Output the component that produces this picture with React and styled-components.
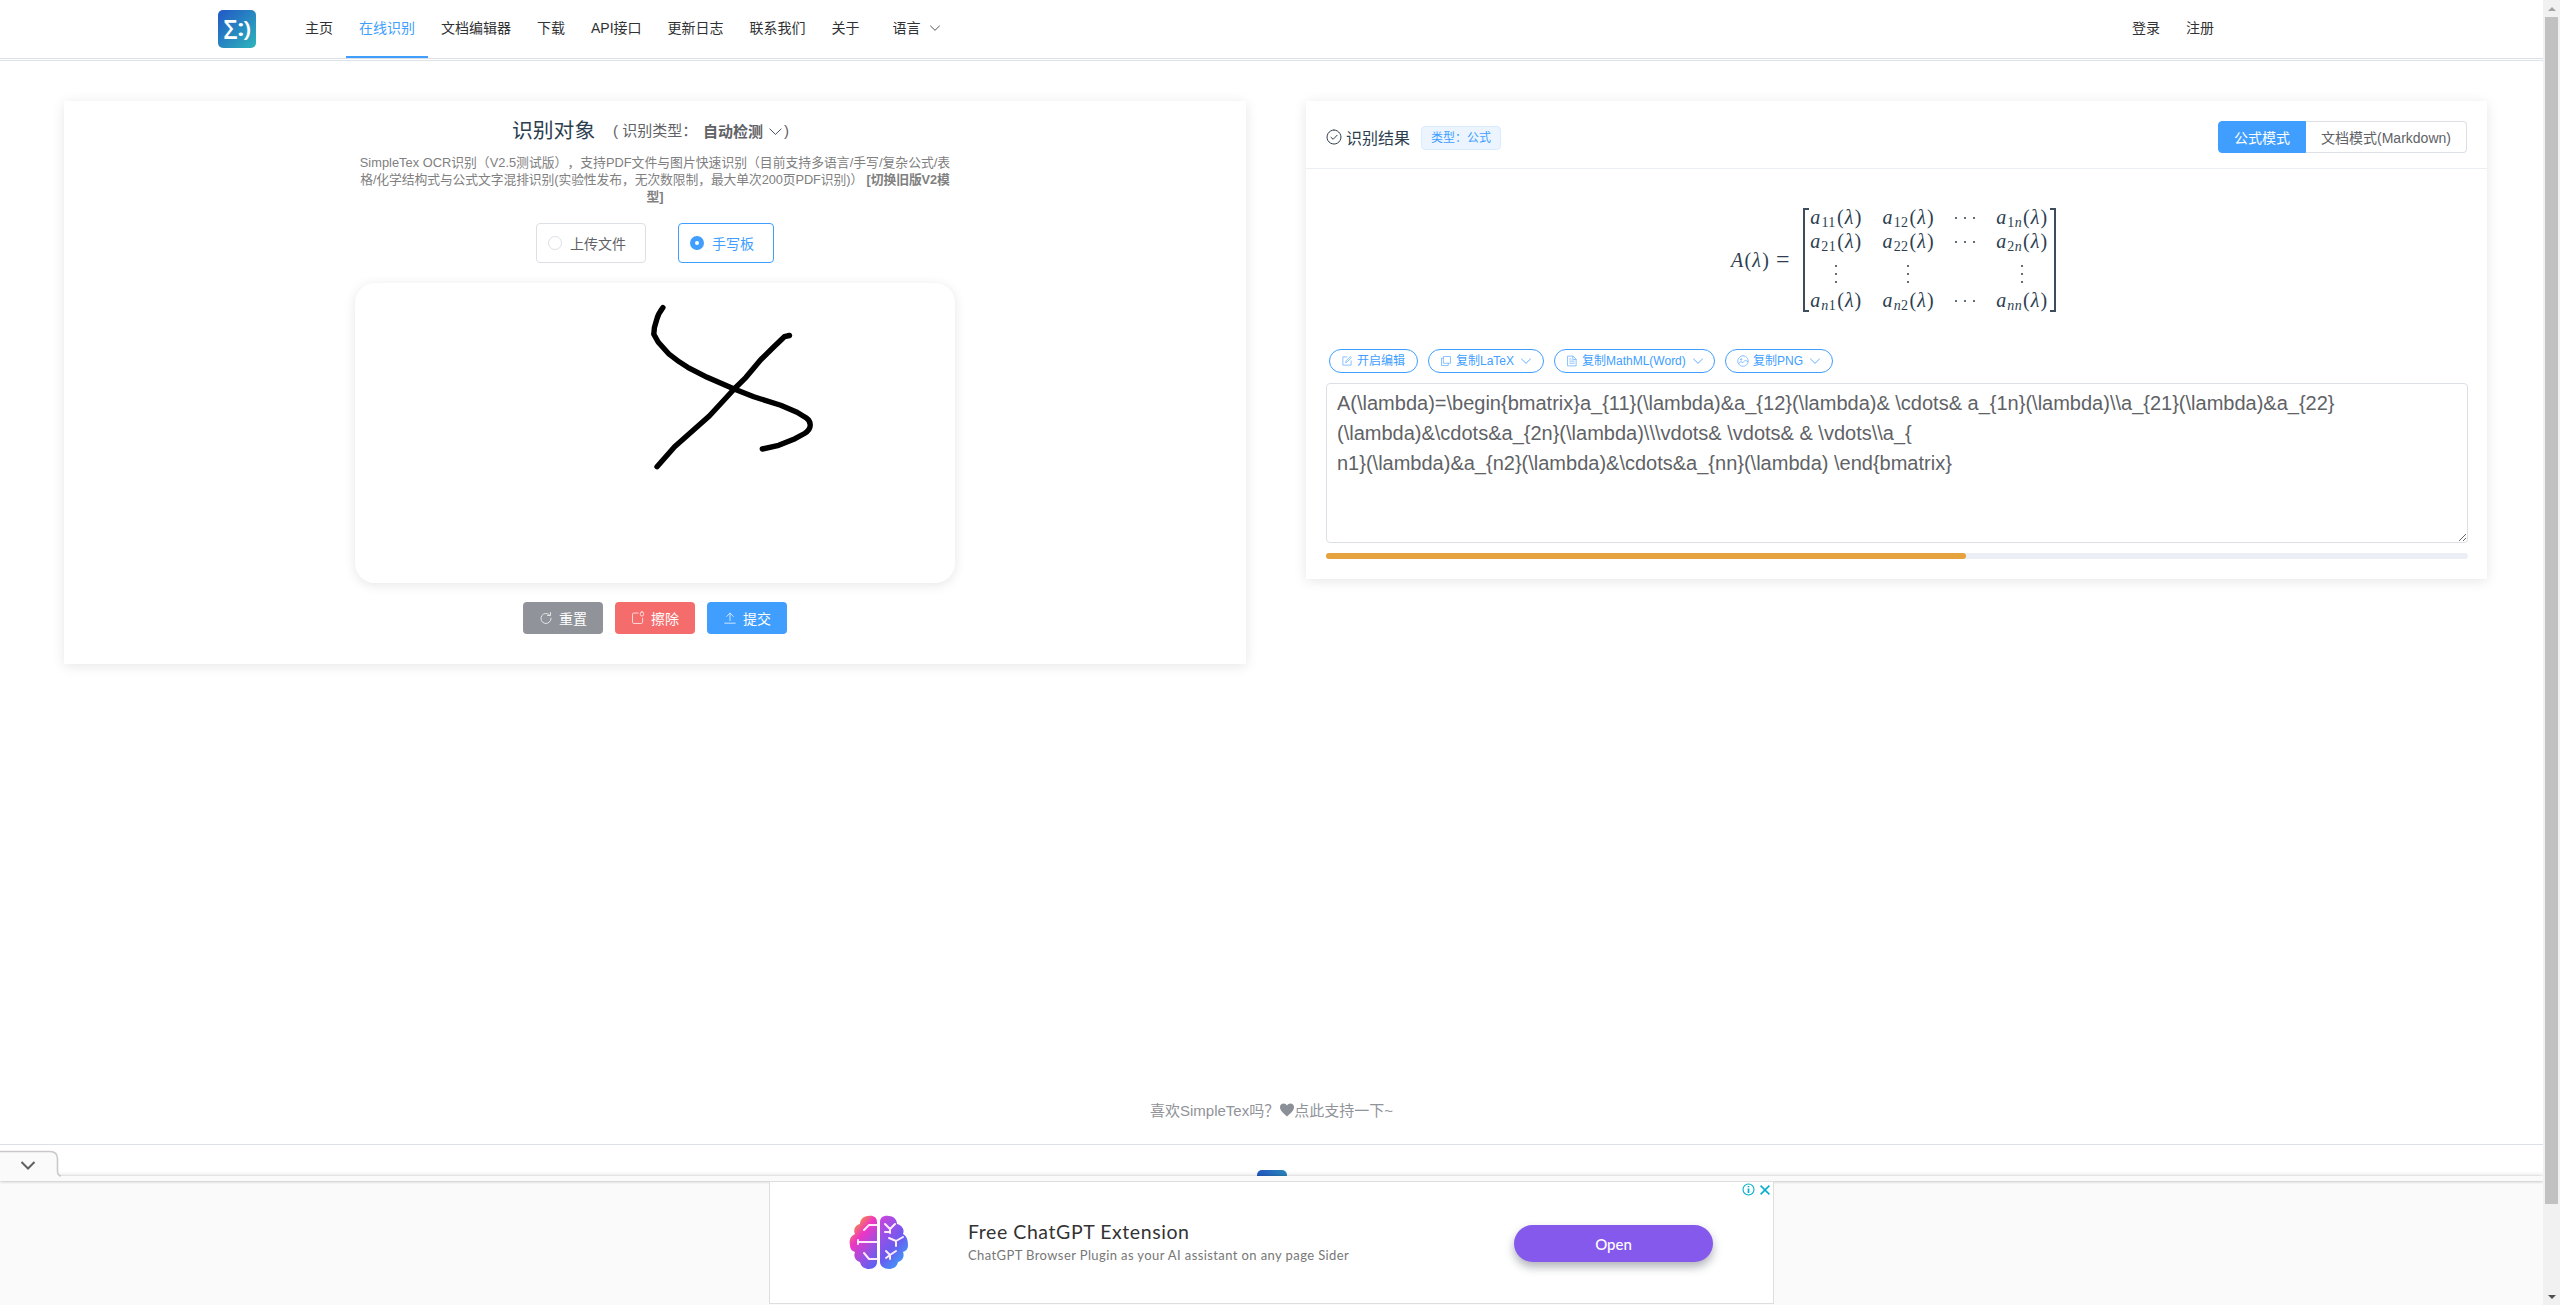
import React from "react";
import styled, { createGlobalStyle, css } from "styled-components";

const Global = createGlobalStyle`
  * { box-sizing: border-box; }
  body { margin: 0; background: #fff; overflow: hidden; }
  body, button, textarea {
    font-family: "Liberation Sans", Arial, "Noto Sans CJK SC", sans-serif;
  }
`;

const Window = styled.div`
  display: flex;
  width: 2560px;
  height: 1305px;
  overflow: hidden;
  background: #fff;
  color: #2c3e50;
`;
const Page = styled.div`
  position: relative;
  width: 2543px;
  height: 1305px;
  display: flex;
  flex-direction: column;
  overflow: hidden;
`;

/* scrollbar */
const Scrollbar = styled.div`
  width: 17px;
  background: #f1f1f1;
  display: flex;
  flex-direction: column;
  align-items: center;
`;
const Arrow = styled.div`
  height: 17px;
  display: flex;
  align-items: center;
  justify-content: center;
`;
const Thumb = styled.div`
  width: 13px;
  height: 1187px;
  background: #c1c1c1;
  margin-bottom: auto;
`;

/* header */
const Header = styled.header`
  flex: none;
  height: 59px;
  border-bottom: 1px solid #dcdfe6;
  padding: 0 316px 0 218px;
  display: flex;
  align-items: flex-start;
`;
const HeaderRule = styled.div`
  flex: none;
  height: 2px;
  border-bottom: 1px solid #e0e2ea;
`;
const LogoBox = styled.div`
  width: 38px;
  height: 38px;
  margin: 10px 36px 0 0;
`;
const NavItem = styled.a`
  height: 58px;
  line-height: 56px;
  padding: 0 13px;
  font-size: 14px;
  white-space: nowrap;
  color: ${(p) => (p.$active ? "#409eff" : "#303133")};
  border-bottom: 2px solid ${(p) => (p.$active ? "#409eff" : "transparent")};
`;
const LangItem = styled(NavItem)`
  padding-left: 20px;
  display: flex;
  align-items: center;
  gap: 8px;
`;
const Spacer = styled.div`
  flex: 1;
`;

/* cards */
const Main = styled.main`
  flex: none;
  height: 1083px;
  padding: 40px 56px 0 64px;
  display: flex;
  align-items: flex-start;
  gap: 60px;
  position: relative;
`;
const Card = styled.section`
  width: ${(p) => p.$w}px;
  height: ${(p) => p.$h}px;
  background: #fff;
  box-shadow: 0 2px 12px rgba(0, 0, 0, 0.1);
`;
const InputCard = styled(Card)`
  display: flex;
  flex-direction: column;
  align-items: center;
`;

const TitleRow = styled.div`
  width: 286px;
  height: 30px;
  margin-top: 15px;
  display: flex;
  align-items: center;
  white-space: nowrap;
`;
const Title = styled.span`
  font-size: 20.8px;
  line-height: 30px;
  width: 101px;
`;
const TypeLabel = styled.span`
  font-size: 15px;
  line-height: 30px;
  color: #606266;
  width: 90px;
`;
const TypeValue = styled.span`
  font-size: 15px;
  line-height: 30px;
  font-weight: 700;
  color: #606266;
  width: 65px;
  padding-top: 1px;
`;
const TypeClose = styled(TypeLabel)`
  width: auto;
  padding-left: 1px;
`;
const Intro = styled.p`
  margin: 8px 0 0;
  height: 51px;
  font-size: 12.8px;
  line-height: 17px;
  text-align: center;
  color: #808080;
  white-space: nowrap;
  text-spacing-trim: space-all;
`;
const IntroLine = styled.span`
  display: block;
  height: 17px;
  letter-spacing: ${(p) => p.$track}px;
`;
const RadioRow = styled.div`
  display: flex;
  gap: 32px;
  margin-top: 18px;
`;
const RadioBox = styled.label`
  height: 40px;
  border: 1px solid ${(p) => (p.$on ? "#409eff" : "#dcdfe6")};
  border-radius: 4px;
  padding: 0 19px 0 11px;
  display: flex;
  align-items: center;
  gap: 8px;
  font-size: 14px;
  color: ${(p) => (p.$on ? "#409eff" : "#606266")};
`;
const Dot = styled.span`
  width: 14px;
  height: 14px;
  border-radius: 50%;
  background: #fff;
  border: ${(p) => (p.$on ? "5px solid #409eff" : "1px solid #dcdfe6")};
`;
const Board = styled.div`
  width: 600px;
  height: 300px;
  margin-top: 20px;
  border-radius: 20px;
  background: #fff;
  box-shadow: 0 2px 12px rgba(0, 0, 0, 0.1);
`;
const Actions = styled.div`
  display: flex;
  gap: 12px;
  margin-top: 19px;
`;
const Action = styled.button`
  width: 80px;
  height: 32px;
  border: 0;
  border-radius: 4px;
  padding: 0 0 1px;
  display: flex;
  align-items: center;
  justify-content: center;
  gap: 6px;
  font-size: 14px;
  color: #fff;
  background: ${(p) => p.$bg};
`;

/* results */
const ResultHead = styled.div`
  height: 68px;
  padding: 20px 20px 0 20px;
  border-bottom: 1px solid #ebeef5;
  display: flex;
  align-items: flex-start;
`;
const ResultTitle = styled.div`
  display: flex;
  align-items: center;
  gap: 4px;
  height: 31px;
  font-size: 16px;
`;
const Tag = styled.span`
  height: 24px;
  margin: 5px 0 0 11px;
  padding: 0 9px;
  border: 1px solid #d9ecff;
  border-radius: 4px;
  background: #ecf5ff;
  color: #409eff;
  font-size: 12px;
  line-height: 22px;
`;
const Modes = styled.div`
  display: flex;
  margin-left: auto;
`;
const Mode = styled.button`
  height: 32px;
  width: ${(p) => (p.$on ? 88 : 161)}px;
  padding: 0;
  font-size: 14px;
  white-space: nowrap;
  ${(p) =>
    p.$on
      ? css`
          color: #fff;
          background: #409eff;
          border: 1px solid #409eff;
          border-radius: 4px 0 0 4px;
        `
      : css`
          color: #606266;
          background: #fff;
          border: 1px solid #dcdfe6;
          border-left: 0;
          border-radius: 0 4px 4px 0;
        `}
`;
const ResultBody = styled.div`
  padding: 0 19px 0 20px;
`;
const Formula = styled.div`
  height: 180px;
  padding: 39px 0 0 405px;
  display: flex;
  align-items: flex-start;
  font-family: "Liberation Serif", "Times New Roman", serif;
  font-size: 20px;
  line-height: 24px;
`;
const Lhs = styled.div`
  width: 72px;
  padding-top: 39px;
  display: flex;
  align-items: baseline;
  letter-spacing: 1.2px;
`;
const Eq = styled.span`
  margin-left: 6px;
  font-size: 24px;
`;
const Matrix = styled.div`
  width: 253px;
  height: 104px;
  display: flex;
  justify-content: space-between;
`;
const Bracket = styled.div`
  width: 6px;
  height: 104px;
  border: 2px solid #3d4d5e;
  ${(p) => (p.$right ? "border-left: 0;" : "border-right: 0;")}
`;
const Cells = styled.div`
  display: grid;
  grid-template-columns: 51px 51px 20px 51px;
  grid-template-rows: 24px 24px 35px 24px;
  column-gap: 21.3px;
  justify-items: center;
  margin: -3px 1.5px 0 0;
`;
const Entry = styled.span`
  display: flex;
  align-items: baseline;
  width: 51px;
  justify-content: space-between;
`;
const It = styled.i`
  font-size: 20px;
`;
const Sub = styled.span`
  font-size: 14px;
  line-height: 14px;
  position: relative;
  top: 3px;
  letter-spacing: 0.4px;
`;
const DotsGroup = styled.span`
  display: flex;
  flex-direction: ${(p) => (p.$v ? "column" : "row")};
  gap: ${(p) => (p.$v ? 6 : 7)}px;
  align-self: center;
  align-items: center;
  margin-top: ${(p) => (p.$v ? 6 : 1)}px;
`;
const Pt = styled.span`
  width: 2px;
  height: 2px;
  border-radius: 1px;
  background: #2c3e50;
`;

const Pills = styled.div`
  display: flex;
  gap: 10px;
  padding-left: 3px;
`;
const Pill = styled.button`
  width: ${(p) => p.$w}px;
  height: 24px;
  padding: 0 0 0 11px;
  border: 1px solid #409eff;
  border-radius: 12px;
  background: #fff;
  color: #409eff;
  font-size: 12px;
  line-height: 22px;
  display: flex;
  align-items: center;
  white-space: nowrap;
  gap: 4px;
`;
const PillChevron = styled.span`
  display: flex;
  margin-left: 2px;
`;
const Latex = styled.textarea`
  display: block;
  width: 1142px;
  height: 160px;
  margin-top: 10px;
  padding: 4px 10px;
  border: 1px solid #dcdfe6;
  border-radius: 4px;
  outline: 0;
  resize: vertical;
  overflow: hidden;
  font-size: 20px;
  line-height: 30px;
  color: #606266;
`;
const Track = styled.div`
  width: 1142px;
  height: 6px;
  margin-top: 10px;
  border-radius: 3px;
  background: #ebeef5;
`;
const Fill = styled.div`
  width: 56%;
  height: 6px;
  border-radius: 3px;
  background: #e6a23c;
`;

/* page foot */
const Support = styled.div`
  position: absolute;
  left: 1150px;
  bottom: 24px;
  height: 22px;
  display: flex;
  align-items: center;
  font-size: 15px;
  color: #909399;
  white-space: nowrap;
`;
const Heart = styled.span`
  display: flex;
  margin: 2px 0 0 1px;
`;
const Foot = styled.footer`
  flex: none;
  height: 161px;
  border-top: 1px solid #dcdfe6;
  display: flex;
  justify-content: center;
`;
const FootLogo = styled.div`
  width: 30px;
  height: 30px;
  margin-top: 25px;
  border-radius: 5px;
  background: linear-gradient(90deg, #2259c5, #2a86bb);
`;

/* anchored advertisement */
const Anchor = styled.aside`
  position: absolute;
  left: 0;
  bottom: 0;
  width: 2543px;
  height: 129px;
  background: #fafafa;
  box-shadow: 0 0 5px rgba(0, 0, 0, 0.2);
  display: flex;
  flex-direction: column;
`;
const AnchorTop = styled.div`
  height: 5px;
  flex: none;
  background: #fafafa;
  box-shadow: 0 1px 3px rgba(0, 0, 0, 0.2);
`;
const Collapse = styled.div`
  position: absolute;
  left: 0;
  top: -26px;
  width: 60px;
  height: 30px;
`;
const Ad = styled.div`
  width: 1005px;
  height: 123px;
  margin-left: 769px;
  border: 1px solid #dedede;
  background: #fff;
  display: flex;
  align-items: flex-start;
  position: relative;
  font-family: Lato, "Open Sans", sans-serif;
`;
const Brain = styled.div`
  margin: 33px 0 0 79px;
  width: 60px;
  height: 56px;
`;
const AdCopy = styled.div`
  width: 400px;
  margin: 37px 0 0 59px;
  white-space: nowrap;
`;
const AdTitle = styled.div`
  font-size: 19.5px;
  line-height: 26px;
  color: #333;
  letter-spacing: 0.57px;
`;
const AdText = styled.div`
  font-size: 13px;
  line-height: 20px;
  color: #777;
  letter-spacing: 0.4px;
`;
const Open = styled.button`
  width: 199px;
  height: 37px;
  margin: 43px 0 0 146px;
  padding: 0;
  border: 0;
  border-radius: 19px;
  background: #8559ec;
  color: #fff;
  font: 500 15px Lato, sans-serif;
  letter-spacing: 0;
  box-shadow: 0 5px 10px rgba(60, 64, 80, 0.4);
`;
const AdMarks = styled.div`
  position: absolute;
  right: 3px;
  top: 1px;
  display: flex;
  align-items: center;
  gap: 5px;
`;

/* Element-style icons on a 1024 grid */
const Svg = ({ size = 14, d, w = 64, o = 1 }) => (
  <svg width={size} height={size} viewBox="0 0 1024 1024" fill="none" stroke="currentColor"
    strokeWidth={w} strokeLinecap="round" strokeLinejoin="round" opacity={o}>
    <path d={d} />
  </svg>
);
const Chevron = ({ size = 12, w = 70 }) => <Svg size={size} w={w} d="M130 340L512 710L894 340" />;

const D = {
  reset: "M800 310A370 370 0 1 0 882 520M840 110V330H620",
  erase: "M520 150H200Q110 150 110 240V820Q110 910 200 910H760Q850 910 850 820V520M800 60Q690 60 690 160V270Q690 370 800 370Q920 370 920 270V160Q920 60 800 60Z",
  upload: "M130 890H894M512 700V160M270 400L512 150L754 400",
  check: "M512 64A448 448 0 1 1 511 64M320 530L456 660L710 400",
  edit: "M500 160H160V864H864V500M400 620L420 510L800 130L890 220L510 600Z",
  copy: "M320 128H896V704H320ZM300 280H128V896H704V730",
  doc: "M160 96H600L864 360V928H160ZM580 110V380H850M320 520H700M320 700H700M320 340H430",
  pic: "M512 64A448 448 0 1 1 511 64M130 740L320 560L500 660L700 440L930 560M360 330A60 60 0 1 1 359 330",
};

const Logo = () => (
  <svg width="38" height="38" viewBox="0 0 38 38">
    <defs>
      <linearGradient id="logo" x1="0" y1="0" x2="1" y2="1">
        <stop offset="0" stopColor="#2257c7" />
        <stop offset="1" stopColor="#2db5bb" />
      </linearGradient>
    </defs>
    <rect width="38" height="38" rx="5" fill="url(#logo)" />
    <g fill="#fff" fontFamily="Open Sans, DejaVu Sans, sans-serif" fontWeight="600">
      <text x="5.5" y="29" fontSize="27" textLength="14" lengthAdjust="spacingAndGlyphs">Σ</text>
      <text x="18.8" y="25.5" fontSize="24" textLength="8" lengthAdjust="spacingAndGlyphs">:</text>
      <text x="25" y="26.5" fontSize="22" textLength="8" lengthAdjust="spacingAndGlyphs">)</text>
    </g>
  </svg>
);

const BrainArt = () => (
  <svg width="60" height="56" viewBox="0 0 60 56">
    <defs>
      <linearGradient id="bl" x1="0.2" y1="0" x2="0.8" y2="1">
        <stop offset="0.05" stopColor="#f79a2e" />
        <stop offset="0.36" stopColor="#ee35c4" />
        <stop offset="0.7" stopColor="#9b50e0" />
        <stop offset="1" stopColor="#5c62f2" />
      </linearGradient>
      <linearGradient id="br" x1="0.2" y1="0" x2="0.8" y2="1">
        <stop offset="0" stopColor="#c048dd" />
        <stop offset="0.55" stopColor="#6a5bf0" />
        <stop offset="1" stopColor="#38a6fa" />
      </linearGradient>
    </defs>
    <path d="M28 7C28 2 24 0 19 1C14 1 11 5 11 9C6 10 4 15 6 19C1 21 0 26 1 30C1 34 3 36 6 37C4 42 7 46 11 47C12 52 16 54 20 54C25 54 28 51 28 47Z" fill="url(#bl)" />
    <path d="M31 7C31 2 35 0 40 1C45 1 48 5 48 9C53 10 56 15 54 19C58 21 59 26 59 30C59 34 57 36 54 37C56 42 53 46 49 47C48 52 44 54 40 54C35 54 31 51 31 47Z" fill="url(#br)" />
    <g fill="none" stroke="#ffe9fb" strokeWidth="2" strokeLinecap="round" strokeLinejoin="round">
      <path d="M28 10H20L15 15M28 27H9M9 25V29M28 44H20L15 38" />
      <path d="M36 9L41 14L46 9M41 14V18M36 17H40M40 23L47 26L54 22M47 26V31M37 36L41 40L47 36M41 40V44M37 43L41 40" />
    </g>
  </svg>
);

const Hand = () => (
  <svg width="600" height="300" viewBox="0 0 600 300" fill="none" stroke="#000" strokeWidth="5.4"
    strokeLinecap="round" strokeLinejoin="round">
    <path d="M307.9 24.7Q303 31 301.6 37Q298.9 44 298.8 51.3L303.3 59.3L313.9 71Q323 78.5 332.7 84.3L352.2 94.3L379.2 106L398.8 113.7L425.7 122.3L442 129.3L451 134.7Q455.4 138 455.2 142Q455.4 147 449.5 150.5L440 155.7L423.7 162.3L407.3 166" />
    <path d="M434.5 52.5L429.4 53.7L418.4 64.3L405.7 76.7L391 94.3L379.2 106L354.3 133L319.6 163.7L302 183.7" />
  </svg>
);

const Cell = ({ i, j }) => {
  const s = (c) => (c === "n" ? <i>n</i> : c);
  return (
    <Entry>
      <It>a</It>
      <Sub>{s(i)}{s(j)}</Sub>
      <span>(</span>
      <It>λ</It>
      <span>)</span>
    </Entry>
  );
};
const Dots = ({ v }) => <DotsGroup $v={v}><Pt /><Pt /><Pt /></DotsGroup>;

const NAV = ["主页", "在线识别", "文档编辑器", "下载", "API接口", "更新日志", "联系我们", "关于"];
const LATEX = [
  "A(\\lambda)=\\begin{bmatrix}a_{11}(\\lambda)&a_{12}(\\lambda)& \\cdots& a_{1n}(\\lambda)\\\\a_{21}(\\lambda)&a_{22}",
  "(\\lambda)&\\cdots&a_{2n}(\\lambda)\\\\\\vdots& \\vdots& & \\vdots\\\\a_{",
  "n1}(\\lambda)&a_{n2}(\\lambda)&\\cdots&a_{nn}(\\lambda) \\end{bmatrix}",
].join("\n");

export default function App() {
  return (
    <Window>
      <Global />
      <Page>
        <Header>
          <LogoBox><Logo /></LogoBox>
          {NAV.map((t, i) => <NavItem key={t} $active={i === 1}>{t}</NavItem>)}
          <LangItem>语言<Chevron size={12} /></LangItem>
          <Spacer />
          <NavItem>登录</NavItem>
          <NavItem>注册</NavItem>
        </Header>
        <HeaderRule />

        <Main>
          <InputCard $w={1182} $h={563}>
            <TitleRow>
              <Title>识别对象</Title>
              <TypeLabel>( 识别类型：</TypeLabel>
              <TypeValue>自动检测</TypeValue>
              <Chevron size={15} w={60} />
              <TypeClose>)</TypeClose>
            </TitleRow>
            <Intro>
              <IntroLine $track={0.03}>SimpleTex OCR识别（V2.5测试版），支持PDF文件与图片快速识别（目前支持多语言/手写/复杂公式/表</IntroLine>
              <IntroLine $track={-0.09}>格/化学结构式与公式文字混排识别(实验性发布，无次数限制，最大单次200页PDF识别)） <b>[切换旧版V2模</b></IntroLine>
              <IntroLine $track={0}><b>型]</b></IntroLine>
            </Intro>
            <RadioRow>
              <RadioBox><Dot />上传文件</RadioBox>
              <RadioBox $on><Dot $on />手写板</RadioBox>
            </RadioRow>
            <Board><Hand /></Board>
            <Actions>
              <Action $bg="#909399"><Svg d={D.reset} o={0.85} />重置</Action>
              <Action $bg="#f56c6c"><Svg d={D.erase} o={0.85} />擦除</Action>
              <Action $bg="#409eff"><Svg d={D.upload} o={0.85} />提交</Action>
            </Actions>
          </InputCard>

          <Card $w={1181} $h={478}>
            <ResultHead>
              <ResultTitle><Svg size={16} d={D.check} />识别结果</ResultTitle>
              <Tag>类型：公式</Tag>
              <Modes>
                <Mode $on>公式模式</Mode>
                <Mode>文档模式(Markdown)</Mode>
              </Modes>
            </ResultHead>
            <ResultBody>
              <Formula>
                <Lhs><It>A</It>(<It>λ</It>)<Eq>=</Eq></Lhs>
                <Matrix>
                  <Bracket />
                  <Cells>
                    <Cell i="1" j="1" /><Cell i="1" j="2" /><Dots /><Cell i="1" j="n" />
                    <Cell i="2" j="1" /><Cell i="2" j="2" /><Dots /><Cell i="2" j="n" />
                    <Dots v /><Dots v /><span /><Dots v />
                    <Cell i="n" j="1" /><Cell i="n" j="2" /><Dots /><Cell i="n" j="n" />
                  </Cells>
                  <Bracket $right />
                </Matrix>
              </Formula>
              <Pills>
                <Pill $w={89}><Svg size={12} d={D.edit} o={0.8} />开启编辑</Pill>
                <Pill $w={116}><Svg size={12} d={D.copy} o={0.8} />复制LaTeX<PillChevron><Chevron /></PillChevron></Pill>
                <Pill $w={161}><Svg size={12} d={D.doc} o={0.8} />复制MathML(Word)<PillChevron><Chevron /></PillChevron></Pill>
                <Pill $w={108}><Svg size={12} d={D.pic} o={0.8} />复制PNG<PillChevron><Chevron /></PillChevron></Pill>
              </Pills>
              <Latex defaultValue={LATEX} spellCheck={false} />
              <Track><Fill /></Track>
            </ResultBody>
          </Card>

          <Support>
            喜欢SimpleTex吗？
            <Heart>
              <svg width="14" height="14" viewBox="0 0 14 14" fill="#8a8f98">
                <path d="M7 13.4C3.2 10 0 7.5 0 4.2C0 2 1.6 0.6 3.6 0.6C5 0.6 6.3 1.3 7 2.6C7.7 1.3 9 0.6 10.4 0.6C12.4 0.6 14 2 14 4.2C14 7.5 10.8 10 7 13.4Z" />
              </svg>
            </Heart>
            点此支持一下~
          </Support>
        </Main>

        <Foot><FootLogo /></Foot>

        <Anchor>
          <Collapse>
            <svg width="62" height="30" viewBox="0 0 62 30">
              <path d="M0 1.5H50Q57.5 1.5 57.5 9V21Q57.5 25.5 61 26.5V30H0Z" fill="#fafafa" />
              <path d="M0 1.5H50Q57.5 1.5 57.5 9V21Q57.5 25.5 61 26" fill="none" stroke="#c9c9c9" strokeWidth="1.6" />
              <path d="M21.5 12L28 18.5L34.5 12" fill="none" stroke="#616161" strokeWidth="2" />
            </svg>
          </Collapse>
          <AnchorTop />
          <Ad>
            <Brain><BrainArt /></Brain>
            <AdCopy>
              <AdTitle>Free ChatGPT Extension</AdTitle>
              <AdText>ChatGPT Browser Plugin as your AI assistant on any page Sider</AdText>
            </AdCopy>
            <Open>Open</Open>
            <AdMarks>
              <svg width="13" height="13" viewBox="0 0 13 13" fill="none" stroke="#00aecd">
                <circle cx="6.5" cy="6.5" r="5.5" strokeWidth="1.1" />
                <path d="M6.5 5.4V10M6.5 2.9V4.3" strokeWidth="1.7" />
              </svg>
              <svg width="10" height="10" viewBox="0 0 10 10" fill="none" stroke="#00aecd" strokeWidth="1.5">
                <path d="M0.6 0.6L9.4 9.4M9.4 0.6L0.6 9.4" />
              </svg>
            </AdMarks>
          </Ad>
        </Anchor>
      </Page>

      <Scrollbar>
        <Arrow><svg width="8" height="4"><path d="M0 4L4 0L8 4Z" fill="#a3a3a3" /></svg></Arrow>
        <Thumb />
        <Arrow><svg width="8" height="4"><path d="M0 0L4 4L8 0Z" fill="#505050" /></svg></Arrow>
      </Scrollbar>
    </Window>
  );
}
